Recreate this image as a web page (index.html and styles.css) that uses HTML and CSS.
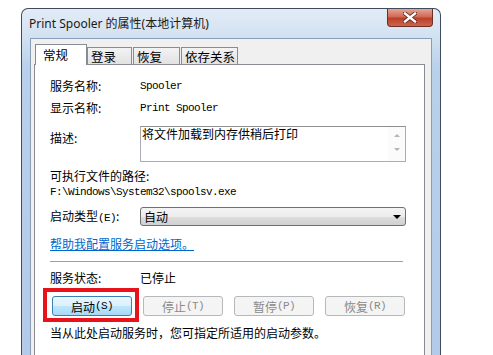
FILE: index.html
```html
<!DOCTYPE html>
<html lang="zh-CN">
  <head>
    <meta charset="UTF-8" />
    <title>Print Spooler 的属性(本地计算机)</title>
    <link rel="stylesheet" href="styles.css">
  </head>
  <body>
    <div class="window">
      <div class="titlebar">
        <span class="title">Print Spooler 的属性(本地计算机)</span>
        <span class="close-btn">
          <svg width="14" height="11" viewBox="0 0 14 11">
            <path d="M2 1.5 L12 9.5 M12 1.5 L2 9.5" stroke="#5a2218" stroke-width="4" stroke-linecap="square" />
            <path d="M2 1.5 L12 9.5 M12 1.5 L2 9.5" stroke="#fff" stroke-width="2.4" stroke-linecap="square" />
          </svg>
        </span>
      </div>
      <div class="client">
        <div class="tabs">
          <span class="tab active">常规</span>
          <span class="tab tab-logon">登录</span>
          <span class="tab tab-recover">恢复</span>
          <span class="tab tab-deps">依存关系</span>
        </div>
        <div class="panel">
          <div class="row first">
            <span class="label">服务名称:</span>
            <span class="mono">Spooler</span>
          </div>
          <div class="row gap-6">
            <span class="label">显示名称:</span>
            <span class="mono">Print Spooler</span>
          </div>
          <div class="row desc-row">
            <span class="label desc-label">描述:</span>
            <div class="desc-box">
              <span class="desc-text">将文件加载到内存供稍后打印</span>
              <span class="scroll-col">
                <span class="arrow-up"></span>
                <span class="arrow-down"></span>
              </span>
            </div>
          </div>
          <div class="row gap-6">可执行文件的路径:</div>
          <div class="row mono">F:\Windows\System32\spoolsv.exe</div>
          <div class="row type-row">
            <span class="label">启动类型<span class="mono">(E)</span>:</span>
            <div class="select">
              <span>自动</span>
              <span class="select-arrow"></span>
            </div>
          </div>
          <div class="row link-row"><a href="#" class="help-link">帮助我配置服务启动选项。</a></div>
          <div class="separator"></div>
          <div class="row status-row">
            <span class="label">服务状态:</span>
            <span>已停止</span>
          </div>
          <div class="buttons">
            <span class="btn primary">启动<span class="mono">(S)</span><span class="highlight"></span></span>
            <span class="btn disabled">停止<span class="mono">(T)</span></span>
            <span class="btn disabled">暂停<span class="mono">(P)</span></span>
            <span class="btn disabled">恢复<span class="mono">(R)</span></span>
          </div>
          <div class="row hint-row">当从此处启动服务时，您可指定所适用的启动参数。</div>
        </div>
      </div>
    </div>
  </body>
</html>
```

FILE: styles.css
```css
body {
  margin: 0;
  height: 355px;
  background-color: #fff;
  overflow: hidden;
  font-family: "Noto Sans CJK SC", sans-serif;
  font-size: 12px;
  color: #000;
}
.window {
  box-sizing: border-box;
  width: 420px;
  height: 347px;
  margin: 8px 0 0 21px;
  padding: 0 8px;
  border: 1px solid #3e4c5e;
  border-bottom: none;
  border-radius: 7px 7px 0 0;
  background: linear-gradient(#e3ecf7, #d2e1f1 28px, #b9d0ea 60px, #b3cbe8);
}
.titlebar {
  display: flex;
  justify-content: space-between;
  align-items: flex-start;
  height: 29px;
  margin: 0 -8px;
  padding: 0 7px;
}
.title {
  font-family: "Noto Sans", "Noto Sans CJK SC", sans-serif;
  font-size: 12px;
  line-height: 29px;
  color: #1a1a1a;
}
.close-btn {
  display: flex;
  justify-content: center;
  align-items: center;
  width: 46px;
  height: 18px;
  box-sizing: border-box;
  border: 1px solid #6b2f25;
  border-top: none;
  border-radius: 0 0 4px 4px;
  background: linear-gradient(#e5a596, #d06a54 45%, #bb3f2a 55%, #cf654c);
}
.client {
  box-sizing: border-box;
  height: 317px;
  padding: 5px 0 0 3px;
  background-color: #f0f0f0;
  border: 1px solid #8a9db6;
  border-bottom: none;
}
.tabs {
  display: flex;
  align-items: flex-end;
  height: 21px;
  margin-bottom: -1px;
  position: relative;
  z-index: 1;
}
.tab {
  box-sizing: border-box;
  height: 17px;
  margin-bottom: 1px;
  padding: 0 0 0 3px;
  font-size: 12.5px;
  line-height: 17px;
  border: 1px solid #898c95;
  border-bottom: none;
  background: linear-gradient(#f3f3f3, #e2e2e2);
}
.tab.active {
  width: 52px;
  height: 21px;
  margin: 0 0 0 1px;
  padding-left: 7px;
  line-height: 20px;
  background: #fff;
}
.tab-logon {
  width: 45px;
}
.tab-recover {
  width: 47px;
  margin-left: 1px;
}
.tab-deps {
  width: 57px;
  margin-left: 1px;
}
.panel {
  box-sizing: border-box;
  width: 391px;
  height: 292px;
  padding-left: 15px;
  background-color: #fff;
  border: 1px solid #898c95;
  border-bottom: none;
}
.row {
  display: flex;
  align-items: center;
  line-height: 16px;
}
.row.first {
  margin-top: 13px;
}
.gap-6 {
  margin-top: 6px;
}
.label {
  width: 90px;
  flex-shrink: 0;
}
.mono {
  font-family: "Liberation Mono", monospace;
  font-size: 11px;
  letter-spacing: -0.6px;
}
.desc-row {
  align-items: flex-start;
  margin-top: 10px;
}
.desc-label {
  margin-top: 4px;
}
.desc-box {
  display: flex;
  box-sizing: border-box;
  width: 266px;
  height: 36px;
  border: 1px solid #abadb3;
  border-top-color: #8e8f8f;
}
.desc-text {
  flex: 1;
  padding-left: 1px;
  line-height: 13px;
}
.scroll-col {
  display: flex;
  flex-direction: column;
  align-items: center;
  width: 17px;
  padding-top: 7px;
  background-color: #fbfbfb;
}
.arrow-up,
.arrow-down {
  width: 0;
  height: 0;
  border-left: 3px solid transparent;
  border-right: 3px solid transparent;
}
.arrow-up {
  border-bottom: 3px solid #b4b4b4;
}
.arrow-down {
  margin-top: 11px;
  border-top: 3px solid #b4b4b4;
}
.type-row {
  margin-top: 7px;
}
.select {
  display: flex;
  justify-content: space-between;
  align-items: center;
  box-sizing: border-box;
  width: 266px;
  height: 19px;
  padding: 0 4px 0 3px;
  border: 1px solid #707070;
  border-radius: 3px;
  background: linear-gradient(#f4f4f4 0%, #ececec 50%, #dedede 51%, #d0d0d0 100%);
}
.select-arrow {
  width: 0;
  height: 0;
  border-left: 4px solid transparent;
  border-right: 4px solid transparent;
  border-top: 4px solid #000;
}
.link-row {
  margin-top: 10px;
}
.help-link {
  color: #0066cc;
  text-decoration: underline;
}
.separator {
  width: 353px;
  margin-top: 9px;
  border-top: 1px solid #a0a0a0;
}
.status-row {
  margin-top: 8px;
}
.buttons {
  display: flex;
  gap: 11px;
  margin: 10px 0 0 2px;
}
.btn {
  position: relative;
  display: flex;
  justify-content: center;
  align-items: center;
  box-sizing: border-box;
  width: 80px;
  height: 20px;
  border: 1px solid #707070;
  border-radius: 3px;
}
.btn.primary {
  border-color: #3c7fb1;
  background: linear-gradient(#eaf6fd 0%, #d9f0fc 50%, #bee6fd 51%, #a7d9f5 100%);
}
.btn.disabled {
  color: #8a8a8a;
  border-color: #b5b9bc;
  background-color: #f4f4f4;
}
.highlight {
  position: absolute;
  left: -10px;
  top: -9px;
  right: -8px;
  bottom: -7px;
  border: 4px solid #e8121b;
}
.hint-row {
  margin-top: 9px;
}
```
